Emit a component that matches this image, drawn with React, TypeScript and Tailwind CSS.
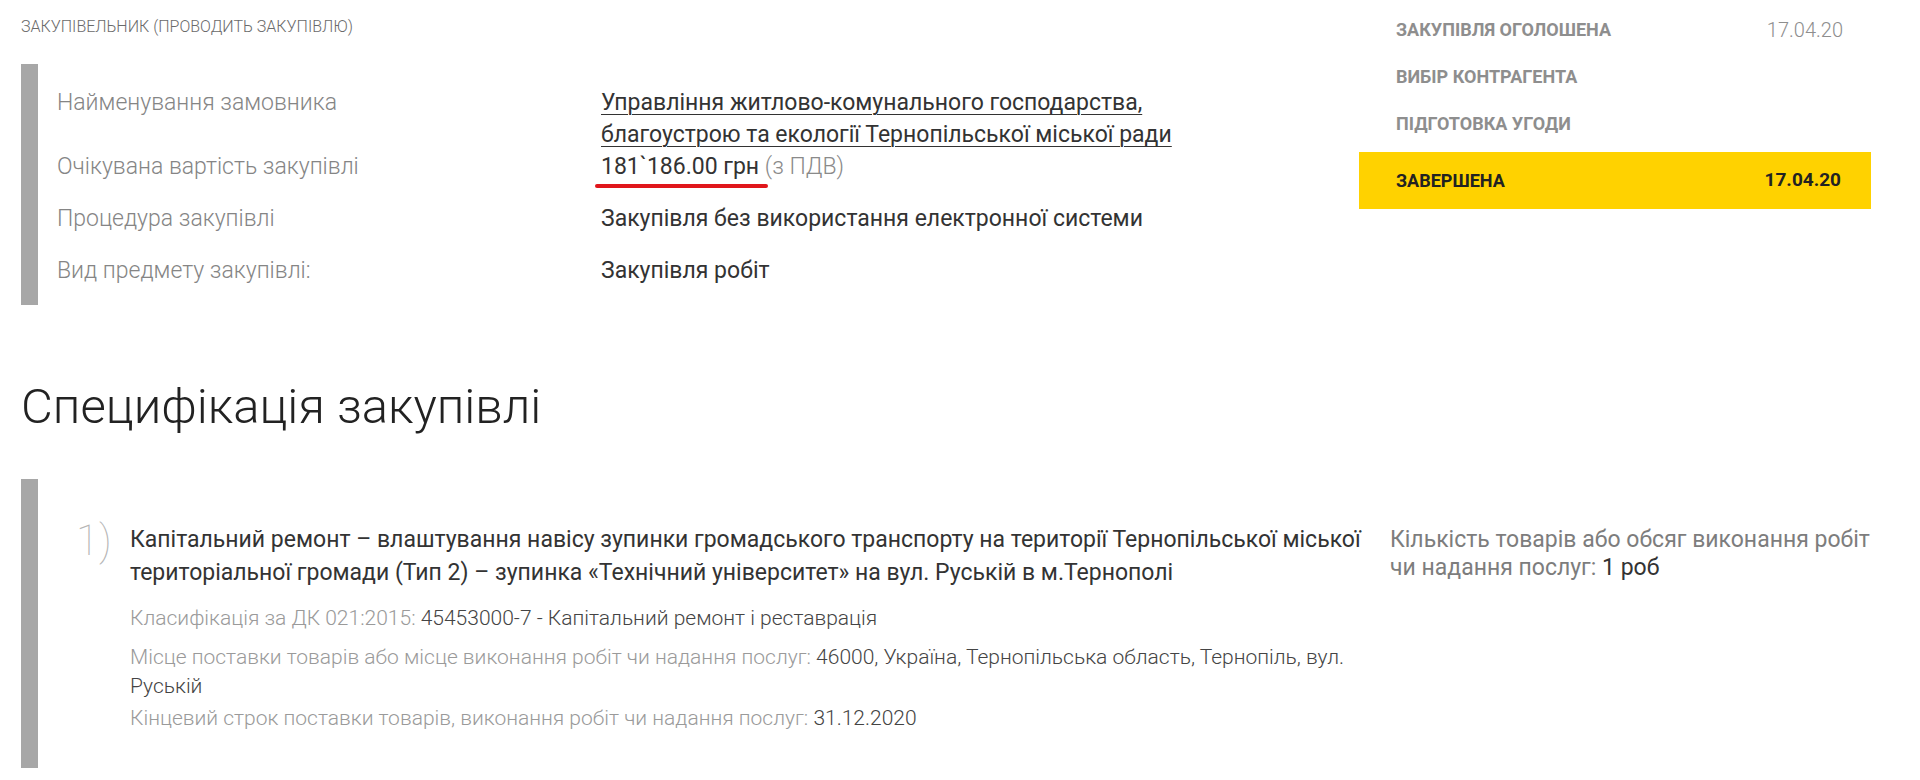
const rows = [
  { label: 'Очікувана вартість закупівлі', kind: 'price' },
  { label: 'Процедура закупівлі', value: 'Закупівля без використання електронної системи' },
  { label: 'Вид предмету закупівлі:', value: 'Закупівля робіт' },
];

const stages = [
  { name: 'ЗАКУПІВЛЯ ОГОЛОШЕНА', date: '17.04.20' },
  { name: 'ВИБІР КОНТРАГЕНТА', date: '' },
  { name: 'ПІДГОТОВКА УГОДИ', date: '' },
];

const App = () => {
  return (
    <div className="min-h-screen bg-white font-['Roboto','Liberation_Sans',sans-serif] text-[#333]">
      <div className="flex">
        {/* Customer block */}
        <div className="flex-1 pl-[21px] pt-[17px]">
          <div className="text-[16px] leading-[20px] font-light text-[#6a6a6a] uppercase">
            Закупівельник (проводить закупівлю)
          </div>

          <div className="flex mt-[27px]">
            <div className="w-[17px] bg-[#a7a7a7] shrink-0" />
            <div className="pl-[19px] pt-[23px] pb-[18px] text-[23px] leading-[32px]">
              <div className="grid grid-cols-[544px_1fr]">
                <div className="font-light text-[#858585]">Найменування замовника</div>
                <div>
                  <a className="underline underline-offset-[4px] decoration-1 text-[#333]">
                    Управління житлово-комунального господарства,
                    <br />
                    благоустрою та екології Тернопільської міської ради
                  </a>
                </div>
              </div>
              {rows.map((r, i) => (
                <div
                  key={r.label}
                  className={`grid grid-cols-[544px_1fr] ${i < 2 ? 'mb-[20px]' : ''}`}
                >
                  <div className="font-light text-[#858585]">{r.label}</div>
                  {r.kind === 'price' ? (
                    <div className="relative">
                      <span>181`186.00 грн</span>{' '}
                      <span className="font-light text-[#8a8a8a]">(з ПДВ)</span>
                      {/* red mark */}
                      <div className="absolute left-[-6px] top-[33px] w-[173px] h-[4px] rounded-full bg-[#e0161b]" />
                    </div>
                  ) : (
                    <div>{r.value}</div>
                  )}
                </div>
              ))}
            </div>
          </div>
        </div>

        {/* Status panel */}
        <div className="w-[512px] mr-[49px] pt-[6px] shrink-0">
          {stages.map((s) => (
            <div key={s.name} className="h-[47px] flex items-center justify-between pl-[37px] pr-[28px]">
              <span className="text-[18px] font-bold text-[#8e8e8e]">{s.name}</span>
              <span className="text-[20px] font-light text-[#8e8e8e]">{s.date}</span>
            </div>
          ))}
          <div className="mt-[5px] h-[57px] bg-[#ffd200] flex items-center justify-between pl-[37px] pr-[30px]">
            <span className="text-[18px] font-bold text-[#222]">ЗАВЕРШЕНА</span>
            <span className="text-[19px] font-bold text-[#222]">17.04.20</span>
          </div>
        </div>
      </div>

      {/* Specification */}
      <h2 className="pl-[21px] mt-[72px] text-[49px] leading-[60px] font-light text-[#222]">
        Специфікація закупівлі
      </h2>

      <div className="flex mt-[42px] pl-[21px]">
        <div className="w-[17px] h-[289px] bg-[#a7a7a7] shrink-0" />
        <div className="flex pt-[44px]">
          <div className="w-[92px] pl-[38px] -mt-[6px] text-[42px] leading-[48px] font-thin text-[#b5b5b5]">1)</div>
          <div className="w-[1245px]">
            <div className="text-[23px] leading-[33px] text-[#333]">
              Капітальний ремонт – влаштування навісу зупинки громадського транспорту на території Тернопільської міської
              територіальної громади (Тип 2) – зупинка «Технічний університет» на вул. Руській в м.Тернополі
            </div>
            <div className="mt-[15px] w-[1235px] text-[21px] leading-[29px] font-light text-[#9a9a9a]">
              <div className="mb-[10px]">
                Класифікація за ДК 021:2015: <span className="text-[#444]">45453000-7 - Капітальний ремонт і реставрація</span>
              </div>
              <div>
                Місце поставки товарів або місце виконання робіт чи надання послуг:{' '}
                <span className="text-[#444]">46000, Україна, Тернопільська область, Тернопіль, вул. Руській</span>
              </div>
              <div className="mt-[3px]">
                Кінцевий строк поставки товарів, виконання робіт чи надання послуг:{' '}
                <span className="text-[#444]">31.12.2020</span>
              </div>
            </div>
          </div>
          <div className="w-[480px] ml-[15px] pt-[3px] text-[23px] leading-[28px] text-[#7d7d7d]">
            Кількість товарів або обсяг виконання робіт чи надання послуг: <span className="text-[#333]">1 роб</span>
          </div>
        </div>
      </div>
    </div>
  );
};

export default App;
